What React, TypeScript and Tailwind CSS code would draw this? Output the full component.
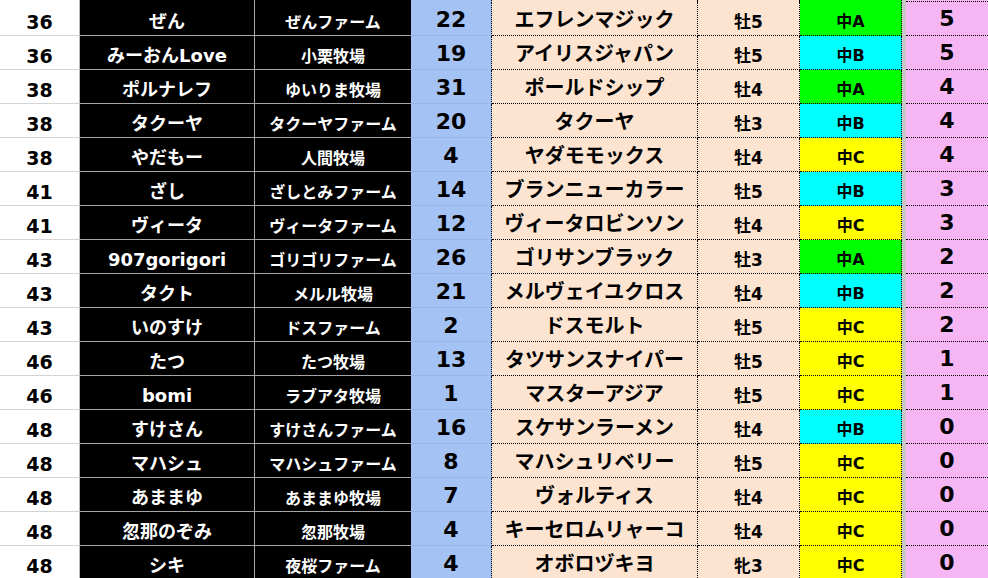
const rows = [
  ['36', 'ぜん', 'ぜんファーム', '22', 'エフレンマジック', '牡5', '中A', '5'],
  ['36', 'みーおんLove', '小栗牧場', '19', 'アイリスジャパン', '牡5', '中B', '5'],
  ['38', 'ポルナレフ', 'ゆいりま牧場', '31', 'ポールドシップ', '牡4', '中A', '4'],
  ['38', 'タクーヤ', 'タクーヤファーム', '20', 'タクーヤ', '牡3', '中B', '4'],
  ['38', 'やだもー', '人間牧場', '4', 'ヤダモモックス', '牡4', '中C', '4'],
  ['41', 'ざし', 'ざしとみファーム', '14', 'ブランニューカラー', '牡5', '中B', '3'],
  ['41', 'ヴィータ', 'ヴィータファーム', '12', 'ヴィータロビンソン', '牡4', '中C', '3'],
  ['43', '907gorigori', 'ゴリゴリファーム', '26', 'ゴリサンブラック', '牡3', '中A', '2'],
  ['43', 'タクト', 'メルル牧場', '21', 'メルヴェイユクロス', '牡4', '中B', '2'],
  ['43', 'いのすけ', 'ドスファーム', '2', 'ドスモルト', '牡5', '中C', '2'],
  ['46', 'たつ', 'たつ牧場', '13', 'タツサンスナイパー', '牡5', '中C', '1'],
  ['46', 'bomi', 'ラブアタ牧場', '1', 'マスターアジア', '牡5', '中C', '1'],
  ['48', 'すけさん', 'すけさんファーム', '16', 'スケサンラーメン', '牡4', '中B', '0'],
  ['48', 'マハシュ', 'マハシュファーム', '8', 'マハシュリベリー', '牡5', '中C', '0'],
  ['48', 'あままゆ', 'あままゆ牧場', '7', 'ヴォルティス', '牡4', '中C', '0'],
  ['48', '忽那のぞみ', '忽那牧場', '4', 'キーセロムリャーコ', '牡4', '中C', '0'],
  ['48', 'シキ', '夜桜ファーム', '4', 'オボロヅキヨ', '牝3', '中C', '0'],
]

const classBg = (c: string) => {
  if (c === '中A') return 'bg-[#00ff00]'
  if (c === '中B') return 'bg-[#00ffff]'
  return 'bg-[#ffff00]'
}

const cell = 'flex justify-center items-center leading-none font-bold whitespace-nowrap shrink-0'

function Row({ r, stub }: { r?: string[]; stub?: boolean }) {
  const h = stub ? 'h-[2px] overflow-hidden' : 'h-[34px]'
  const c = r || ['', '', '', '', '', '', '中A', '']
  return (
    <div className={`flex ${h}`}>
      <div className={`${cell} w-[80px] bg-white text-black border-r border-b border-[#d4d4d4] border-r-[#b8b8b8] text-[19px] pt-[8px]`}>{c[0]}</div>
      <div className={`${cell} w-[175px] bg-black text-white border-r border-b border-[#a6a6a6] text-[18px] pt-[6px]`}>{c[1]}</div>
      <div className={`${cell} w-[156px] bg-black text-white border-b border-[#a6a6a6] text-[16px] pt-[9px]`}>{c[2]}</div>
      <div className={`${cell} w-[81px] bg-[#a4c2f4] text-black border-b border-b-[#8eaadc] border-r border-r-black border-dotted border-b-solid text-[22px] pt-[2px]`}>{c[3]}</div>
      <div className={`${cell} w-[206px] bg-[#fce4d0] text-black border-r border-b border-black border-dotted text-[20px] pt-[3px]`}>{c[4]}</div>
      <div className={`${cell} w-[102px] bg-[#fce4d0] text-black border-r border-b border-black border-dotted text-[17px] pt-[7px]`}>{c[5]}</div>
      <div className={`${cell} w-[102px] ${classBg(c[6])} text-black border-r border-b border-black border-dotted text-[16px] pt-[6px]`}>{stub ? '' : c[6]}</div>
      <div className="w-[4px] shrink-0 bg-[#c8c8c8]" />
      <div className={`${cell} flex-1 bg-[#f6b6f4] text-black border-b border-black border-dotted text-[22px] pt-[1px]`}>{c[7]}</div>
    </div>
  )
}

export default function App() {
  return (
    <div
      className="w-[988px] h-[578px] overflow-hidden bg-white"
      style={{ fontFamily: '"DejaVu Sans", "Noto Sans CJK JP", sans-serif' }}
    >
      <Row stub />
      {rows.map((r, i) => <Row key={i} r={r} />)}
    </div>
  )
}
